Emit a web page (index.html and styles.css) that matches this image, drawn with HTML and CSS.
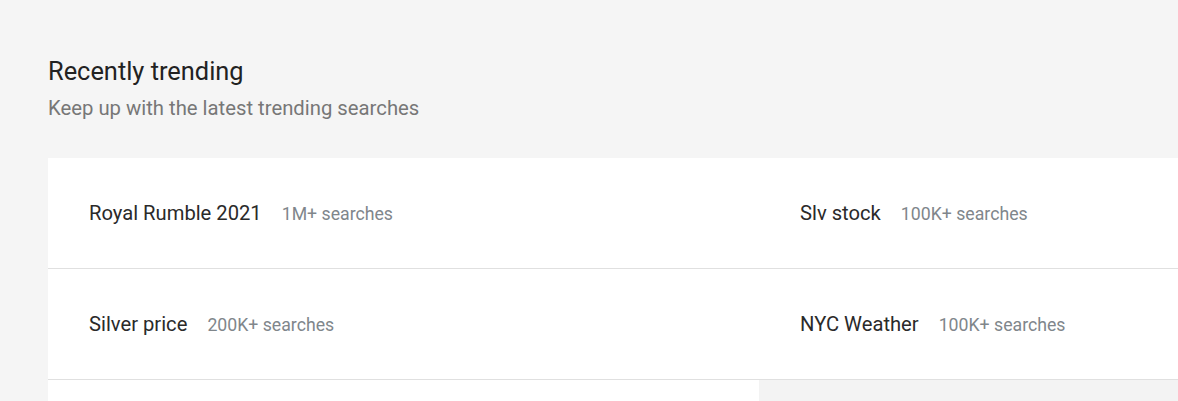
FILE: index.html
```html
<!DOCTYPE html>
<html>
<head>
<meta charset="utf-8">
<link rel="stylesheet" href="styles.css">
</head>
<body>
<section class="trending">
  <h2 class="title">Recently trending</h2>
  <p class="subtitle">Keep up with the latest trending searches</p>
  <div class="card">
    <div class="cell"><div class="entry"><span class="term">Royal Rumble 2021</span><span class="count">1M+ searches</span></div></div>
    <div class="cell"><div class="entry"><span class="term">Slv stock</span><span class="count">100K+ searches</span></div></div>
    <div class="cell"><div class="entry"><span class="term">Silver price</span><span class="count">200K+ searches</span></div></div>
    <div class="cell"><div class="entry"><span class="term">NYC Weather</span><span class="count">100K+ searches</span></div></div>
    <div class="cell"><div class="entry"><span class="term">Super Bowl</span><span class="count">100K+ searches</span></div></div>
    <div class="cell cell-hover"><div class="entry"><span class="term">Weather</span><span class="count">100K+ searches</span></div></div>
  </div>
</section>
</body>
</html>
```
FILE: styles.css
```css
html, body {
  margin: 0;
  padding: 0;
  background: #f5f5f5;
  overflow: hidden;
  font-family: Roboto, "Noto Sans", sans-serif;
}

.trending {
  padding: 56px 0 0 48px;
  width: 1422px;
}

.title {
  margin: 0;
  font-size: 25.4px;
  line-height: 30px;
  font-weight: 400;
  color: #222;
}

.subtitle {
  margin: 9px 0 0;
  font-size: 20.3px;
  line-height: 26px;
  color: #777;
}

.card {
  margin-top: 37px;
  display: grid;
  grid-template-columns: 711px 711px;
  background: #fff;
}

.cell {
  box-sizing: border-box;
  height: 111px;
  border-bottom: 1px solid #e0e0e0;
  display: flex;
  align-items: center;
  padding: 2px 0 0 41px;
  background: #fff;
}

.cell-hover {
  background: #f3f3f3;
}

.entry {
  line-height: 26px;
}

.term {
  font-size: 20.2px;
  color: #2a2a2a;
}

.count {
  margin-left: 20px;
  font-size: 17.7px;
  color: #80868b;
}
```
